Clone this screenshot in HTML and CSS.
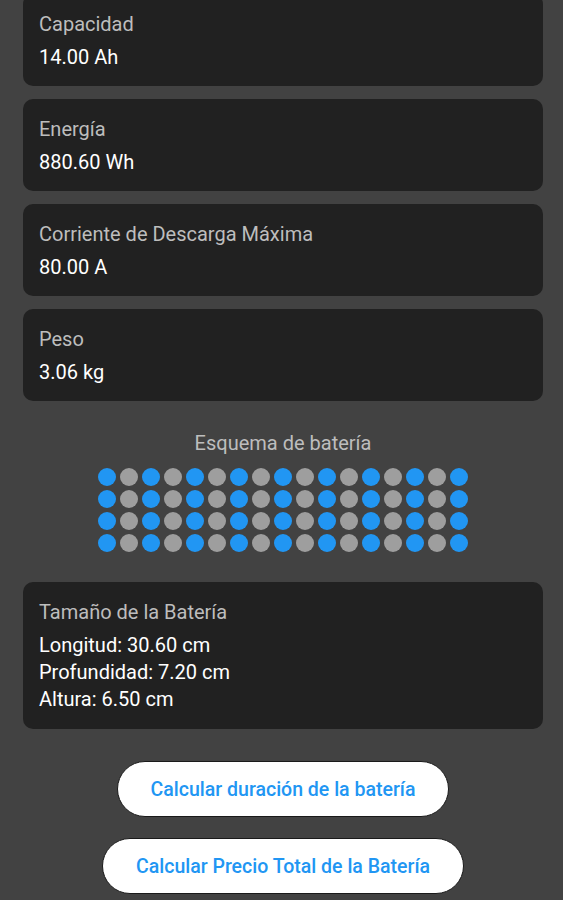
FILE: index.html
```html
<!DOCTYPE html>
<html lang="es">
<head>
    <meta charset="UTF-8">
    <meta name="viewport" content="width=device-width, initial-scale=1.0">
    <title>Resultado de batería</title>
    <link rel="stylesheet" href="styles.css">
</head>
<body>
    <div class="page">
        <div class="info-card">
            <div class="info-label">Capacidad</div>
            <div class="info-value">14.00 Ah</div>
        </div>
        <div class="info-card">
            <div class="info-label">Energía</div>
            <div class="info-value">880.60 Wh</div>
        </div>
        <div class="info-card">
            <div class="info-label">Corriente de Descarga Máxima</div>
            <div class="info-value">80.00 A</div>
        </div>
        <div class="info-card">
            <div class="info-label">Peso</div>
            <div class="info-value">3.06 kg</div>
        </div>

        <!-- esquema de celdas -->
        <div class="scheme">
            <div class="scheme-title">Esquema de batería</div>
            <div class="cell-grid" id="cellGrid"></div>
        </div>

        <div class="info-card size-card">
            <div class="info-label">Tamaño de la Batería</div>
            <div class="info-value">Longitud: 30.60 cm</div>
            <div class="info-value">Profundidad: 7.20 cm</div>
            <div class="info-value">Altura: 6.50 cm</div>
        </div>

        <div class="actions">
            <button class="action-button">Calcular duración de la batería</button>
            <button class="action-button">Calcular Precio Total de la Batería</button>
        </div>
    </div>

    <script>
        // 4 filas x 17 columnas, columnas pares en azul
        const grid = document.getElementById("cellGrid");
        for (let r = 0; r < 4; r++) {
            for (let c = 0; c < 17; c++) {
                const cell = document.createElement("span");
                cell.className = c % 2 === 0 ? "cell cell-blue" : "cell cell-grey";
                grid.appendChild(cell);
            }
        }
    </script>
</body>
</html>
```

FILE: styles.css
```css
body {
    margin: 0;
    background-color: #424242;
    font-family: Roboto, "Liberation Sans", Arial, sans-serif;
    overflow: hidden;
}
.page {
    padding: 0 20px 0 23px;
    margin-top: -6px;
}
.info-card {
    background-color: #212121;
    border-radius: 10px;
    padding: 18px 16px 15px;
    margin-bottom: 13px;
}
.info-label {
    color: #bdbdbd;
    font-size: 20px;
    line-height: 24px;
    margin-bottom: 8px;
}
.info-value {
    color: #ffffff;
    font-size: 20px;
    line-height: 27px;
}
.scheme {
    padding-top: 17px;
    display: flex;
    flex-direction: column;
    align-items: center;
}
.scheme-title {
    color: #bdbdbd;
    font-size: 20px;
    line-height: 24px;
    margin-bottom: 13px;
}
.cell-grid {
    display: grid;
    grid-template-columns: repeat(17, 18px);
    gap: 4px;
}
.cell {
    width: 18px;
    height: 18px;
    border-radius: 50%;
}
.cell-blue {
    background-color: #2196f3;
}
.cell-grey {
    background-color: #9e9e9e;
}
.size-card {
    margin-top: 30px;
    padding-bottom: 16px;
}
.actions {
    display: flex;
    flex-direction: column;
    align-items: center;
    gap: 21px;
    margin-top: 32px;
}
.action-button {
    background-color: #ffffff;
    color: #2196f3;
    font-family: Roboto, "Liberation Sans", Arial, sans-serif;
    font-size: 19.5px;
    font-weight: 500;
    height: 56px;
    padding: 0 33px;
    border: 1.5px solid #1a1a1a;
    border-radius: 28px;
    cursor: pointer;
}
```
